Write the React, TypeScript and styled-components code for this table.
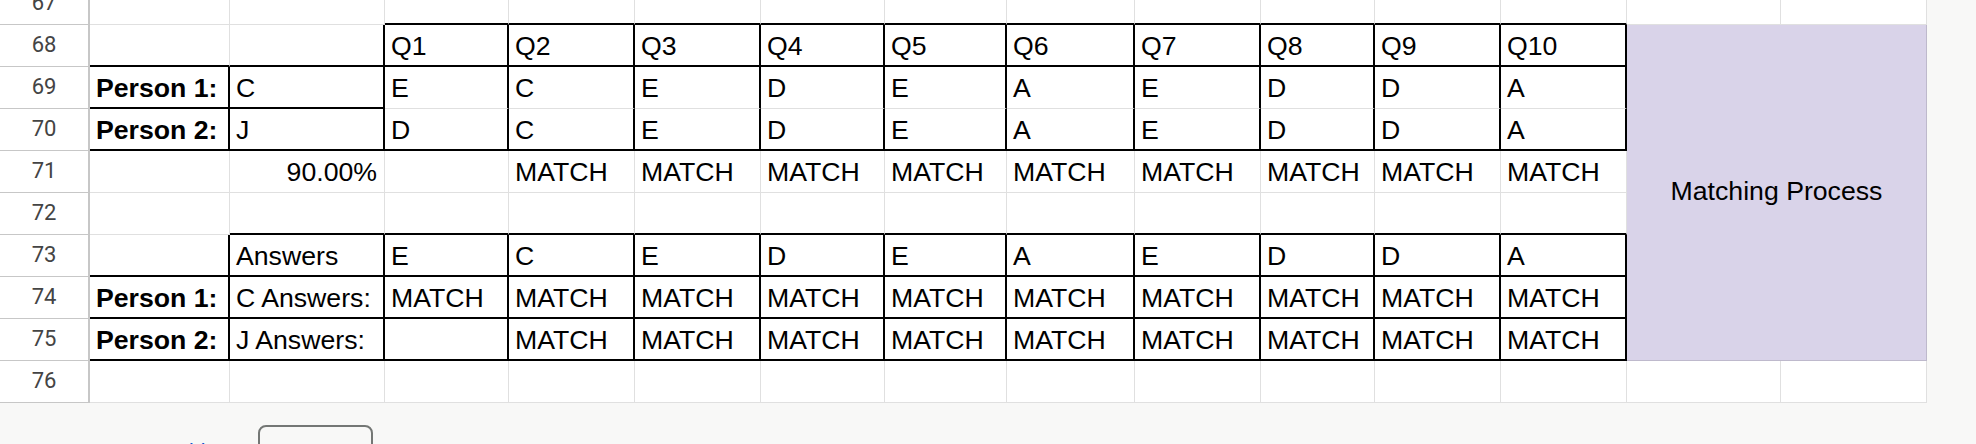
import React from 'react';
import styled, { createGlobalStyle } from 'styled-components';

const GlobalStyle = createGlobalStyle`
  html, body {
    margin: 0;
    padding: 0;
    background: #f8f8f7;
    overflow: hidden;
  }
`;

const Page = styled.div`
  display: flex;
  flex-direction: column;
  width: 1976px;
  height: 444px;
  overflow: hidden;
  background: #f8f8f7;
`;

const Sheet = styled.div`
  display: grid;
  grid-template-columns: 90px 140px 155px 124px 126px 126px 124px 122px 128px 126px 114px 126px 126px 154px 146px;
  grid-template-rows: repeat(10, 42px);
  margin-top: -17px;
  width: 1927px;
  background: #fff;
  font-family: 'Liberation Sans', Arial, sans-serif;
  font-size: 26.67px;
  color: #000;
`;

const RowHead = styled.div`
  box-sizing: border-box;
  display: flex;
  align-items: center;
  justify-content: center;
  padding-bottom: 2px;
  border-right: 2px solid #c7c7c7;
  border-bottom: 1px solid #c7c7c7;
  background: #fff;
  font-family: Roboto, 'Liberation Sans', sans-serif;
  font-size: 22px;
  color: #444;
`;

const Cell = styled.div<{ $bb?: boolean; $br?: boolean; $right?: boolean; $bold?: boolean }>`
  box-sizing: border-box;
  display: flex;
  align-items: flex-end;
  justify-content: ${(p) => (p.$right ? 'flex-end' : 'flex-start')};
  padding: 0 ${(p) => (p.$right ? 7 : 6)}px ${(p) => (p.$bb ? 4 : 5)}px 6px;
  border-right: ${(p) => (p.$br ? '2px solid #000' : '1px solid rgba(0, 0, 0, 0.12)')};
  border-bottom: ${(p) => (p.$bb ? '2px solid #000' : '1px solid rgba(0, 0, 0, 0.12)')};
  font-weight: ${(p) => (p.$bold ? 700 : 400)};
  line-height: 30px;
  white-space: nowrap;
  overflow: hidden;
`;

const Merged = styled.div`
  box-sizing: border-box;
  grid-column: 14 / 16;
  grid-row: 2 / 10;
  display: flex;
  align-items: center;
  justify-content: center;
  padding-bottom: 4px;
  background: #d9d3e9;
  border-right: 1px solid rgba(0, 0, 0, 0.12);
  border-bottom: 1px solid rgba(0, 0, 0, 0.12);
  line-height: 30px;
`;

const Footer = styled.div`
  display: flex;
  align-items: flex-start;
  padding: 22px 0 0 168px;
  gap: 53px;
`;

const AddLink = styled.span`
  margin-top: 15px;
  font-family: 'Liberation Sans', Arial, sans-serif;
  font-size: 21px;
  line-height: 1;
  color: #0b57d0;
`;

const RowsInput = styled.div`
  box-sizing: border-box;
  width: 115px;
  height: 56px;
  border: 2px solid #747775;
  border-radius: 8px;
`;

type CellDef = { text: string; right?: boolean; bold?: boolean };

const letters1 = ['E', 'C', 'E', 'D', 'E', 'A', 'E', 'D', 'D', 'A'];
const letters2 = ['D', 'C', 'E', 'D', 'E', 'A', 'E', 'D', 'D', 'A'];
const qs = Array.from({ length: 10 }, (_, i) => `Q${i + 1}`);

// columns: 2 = B, 3 = C, 4..13 = D..M, 14 = N, 15 = O
function content(r: number, c: number): CellDef | undefined {
  const qi = c - 4;
  switch (r) {
    case 68:
      if (qi >= 0 && qi < 10) return { text: qs[qi] };
      return undefined;
    case 69:
      if (c === 2) return { text: 'Person 1:', bold: true };
      if (c === 3) return { text: 'C' };
      if (qi >= 0 && qi < 10) return { text: letters1[qi] };
      return undefined;
    case 70:
      if (c === 2) return { text: 'Person 2:', bold: true };
      if (c === 3) return { text: 'J' };
      if (qi >= 0 && qi < 10) return { text: letters2[qi] };
      return undefined;
    case 71:
      if (c === 3) return { text: '90.00%', right: true };
      if (qi >= 1 && qi < 10) return { text: 'MATCH' };
      return undefined;
    case 73:
      if (c === 3) return { text: 'Answers' };
      if (qi >= 0 && qi < 10) return { text: letters1[qi] };
      return undefined;
    case 74:
      if (c === 2) return { text: 'Person 1:', bold: true };
      if (c === 3) return { text: 'C Answers:' };
      if (qi >= 0 && qi < 10) return { text: 'MATCH' };
      return undefined;
    case 75:
      if (c === 2) return { text: 'Person 2:', bold: true };
      if (c === 3) return { text: 'J Answers:' };
      if (qi >= 1 && qi < 10) return { text: 'MATCH' };
      return undefined;
    default:
      return undefined;
  }
}

const inRange = (c: number, a: number, b: number) => c >= a && c <= b;

function blackBottom(r: number, c: number): boolean {
  switch (r) {
    case 67:
      return inRange(c, 4, 13);
    case 68:
      return inRange(c, 2, 13);
    case 69:
      return inRange(c, 2, 3);
    case 70:
      return inRange(c, 2, 13);
    case 72:
      return inRange(c, 3, 13);
    case 73:
    case 74:
    case 75:
      return inRange(c, 2, 13);
    default:
      return false;
  }
}

function blackRight(r: number, c: number): boolean {
  switch (r) {
    case 68:
      return inRange(c, 3, 13);
    case 69:
    case 70:
    case 73:
    case 74:
    case 75:
      return inRange(c, 2, 13);
    default:
      return false;
  }
}

const rows = Array.from({ length: 10 }, (_, i) => 67 + i);

export default function App() {
  const items: React.ReactNode[] = [];
  rows.forEach((r) => {
    items.push(<RowHead key={`h${r}`}>{r}</RowHead>);
    for (let c = 2; c <= 15; c++) {
      if (r >= 68 && r <= 75 && c >= 14) continue;
      const def = content(r, c);
      items.push(
        <Cell
          key={`${r}-${c}`}
          $bb={blackBottom(r, c)}
          $br={blackRight(r, c)}
          $right={def?.right}
          $bold={def?.bold}
        >
          {def?.text ?? ''}
        </Cell>
      );
    }
  });

  return (
    <>
      <GlobalStyle />
      <Page>
        <Sheet>
          <Merged>Matching Process</Merged>
          {items}
        </Sheet>
        <Footer>
          <AddLink>Add</AddLink>
          <RowsInput />
        </Footer>
      </Page>
    </>
  );
}
